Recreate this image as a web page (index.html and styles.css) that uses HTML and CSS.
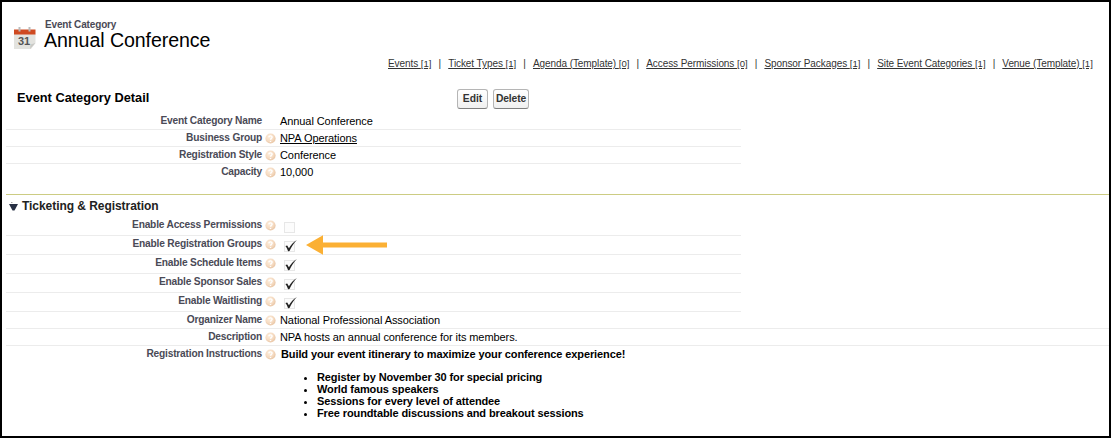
FILE: index.html
```html
<!DOCTYPE html>
<html lang="en">
<head>
<meta charset="utf-8">
<title>Annual Conference</title>
<link rel="stylesheet" href="styles.css">
</head>
<body>
<svg width="0" height="0" class="defs">
  <defs>
    <radialGradient id="orb" cx="40%" cy="35%" r="65%"><stop offset="0" stop-color="#fdeedd"/><stop offset=".6" stop-color="#f6dcc3"/><stop offset="1" stop-color="#e9c6a6"/></radialGradient>
    <symbol id="help" viewBox="0 0 11 11"><circle cx="5.5" cy="5.5" r="5.1" fill="url(#orb)"/><path d="M3.8 4.2C3.9 2.4 7.2 2.5 7.1 4.3C7 5.4 5.5 5.4 5.5 6.8M5.5 7.9V8.9" fill="none" stroke="#fff" stroke-width="1.4"/></symbol>
    <symbol id="box" viewBox="0 0 16 16"><rect x="3.5" y="3.5" width="10" height="10" fill="#fcfcfc" stroke="#d0d0d0" stroke-dasharray="1 1"/></symbol>
    <symbol id="check" viewBox="0 0 16 16"><use href="#box"/><path d="M4.4 8L6.2 7.4L7.9 10.2C9.8 7 12.2 4.4 15.9 2C12.6 5.3 10.5 8.8 8.5 13L7.1 13.3C6.5 11.4 5.7 9.6 4.4 8Z" fill="#222"/></symbol>
  </defs>
</svg>
<main class="page">
  <header class="title-bar">
    <svg class="calendar" width="24" height="24" viewBox="0 0 24 24">
      <path d="M1 7H22.5V16L18 22H1Z" fill="#e3e3df"/><path d="M22.5 16L17 22L17.5 17.5Z" fill="#c9c9c5"/>
      <rect x="1" y="2.5" width="21.5" height="5" fill="#cf4a21"/>
      <path d="M6.5 0V4.5M16.5 0V4.5" stroke="#bbb" stroke-width="2"/>
      <text x="5" y="18" class="day">31</text>
    </svg>
    <div><div class="kind">Event Category</div><h1>Annual Conference</h1></div>
  </header>
  <nav class="links">
    <a>Events <small>[1]</small></a><i>|</i><a>Ticket Types <small>[1]</small></a><i>|</i><a>Agenda (Template) <small>[0]</small></a><i>|</i><a>Access Permissions <small>[0]</small></a><i>|</i><a>Sponsor Packages <small>[1]</small></a><i>|</i><a>Site Event Categories <small>[1]</small></a><i>|</i><a>Venue (Template) <small>[1]</small></a>
  </nav>
  <div class="detail-bar"><h2>Event Category Detail</h2><button class="edit">Edit</button><button class="delete">Delete</button></div>
  <section class="fields">
    <div class="row"><b>Event Category Name</b><span></span><p>Annual Conference</p></div>
    <div class="row"><b>Business Group</b><svg class="help"><use href="#help"/></svg><p><u>NPA Operations</u></p></div>
    <div class="row"><b>Registration Style</b><svg class="help"><use href="#help"/></svg><p>Conference</p></div>
    <div class="row last"><b>Capacity</b><svg class="help"><use href="#help"/></svg><p>10,000</p></div>
  </section>
  <div class="section-head"><svg width="9" height="9" viewBox="0 0 9 9"><path d="M0 2H9L5.5 8.5H3.5Z" fill="#283044"/><path d="M2 .5H3.5" stroke="#aaa"/></svg><h3>Ticketing &amp; Registration</h3></div>
  <section class="fields">
    <div class="row tall"><b>Enable Access Permissions</b><svg class="help"><use href="#help"/></svg><svg class="mark"><use href="#box"/></svg></div>
    <div class="row tall"><b>Enable Registration Groups</b><svg class="help"><use href="#help"/></svg><svg class="mark"><use href="#check"/></svg><svg class="arrow" viewBox="0 0 81 20"><path d="M0 10L17 .2V7.5H81V12.5H17V19.8Z" fill="#fbb034"/></svg></div>
    <div class="row tall"><b>Enable Schedule Items</b><svg class="help"><use href="#help"/></svg><svg class="mark"><use href="#check"/></svg></div>
    <div class="row tall"><b>Enable Sponsor Sales</b><svg class="help"><use href="#help"/></svg><svg class="mark"><use href="#check"/></svg></div>
    <div class="row tall"><b>Enable Waitlisting</b><svg class="help"><use href="#help"/></svg><svg class="mark"><use href="#check"/></svg></div>
    <div class="row wide"><b>Organizer Name</b><svg class="help"><use href="#help"/></svg><p>National Professional Association</p></div>
    <div class="row wide"><b>Description</b><svg class="help"><use href="#help"/></svg><p>NPA hosts an annual conference for its members.</p></div>
    <div class="row last"><b>Registration Instructions</b><svg class="help"><use href="#help"/></svg>
      <div class="rich"><div>Build your event itinerary to maximize your conference experience!</div>
        <ul><li>Register by November 30 for special pricing</li><li>World famous speakers</li><li>Sessions for every level of attendee</li><li>Free roundtable discussions and breakout sessions</li></ul></div></div>
  </section>
</main>
</body>
</html>
```

FILE: styles.css
```css
* { box-sizing: border-box; margin: 0; padding: 0; }
body { font-family: "Liberation Sans", Arial, sans-serif; background: #fff; color: #000; }
.defs { position: absolute; }
.page { width: 1111px; height: 438px; border: 2px solid #000; padding-left: 4px; overflow: hidden; white-space: nowrap; }
.title-bar { display: flex; height: 55px; padding: 17px 0 0 7px; }
.calendar { margin: 8px 7px 0 0; }
.day { font-size: 11px; font-weight: bold; fill: #555; }
.kind { font-size: 10px; line-height: 12px; font-weight: bold; letter-spacing: -.15px; color: #4a4a56; padding-left: 1px; }
h1 { font-size: 19.6px; line-height: 20px; margin-top: -1px; letter-spacing: -.08px; font-weight: normal; }
.links { display: flex; justify-content: space-between; width: 705px; margin-left: 382px; height: 29px; font-size: 10px; line-height: 14px; letter-spacing: -.08px; color: #333; }
.links a { text-decoration: underline; }
.links small { font-size: 9.6px; letter-spacing: 0; }
.links i { font-style: normal; }
.detail-bar { display: flex; height: 27px; padding-left: 11px; }
h2 { width: 440px; font-size: 12.8px; line-height: 24px; }
button { height: 20px; margin-top: 3px; border: 1px solid #b5b5b5; border-bottom-color: #7f7f7f; border-radius: 3px; background: linear-gradient(#fff, #f0f0f0); font: bold 10.3px/18px "Liberation Sans", Arial, sans-serif; color: #333; }
.edit { width: 31px; margin-right: 5px; }
.delete { width: 36px; letter-spacing: -.15px; }
.row { display: grid; grid-template-columns: 256px 11px 16px 1fr; width: 735px; height: 17px; border-bottom: 1px solid #ececec; align-items: start; }
.row b { text-align: right; font-size: 10.2px; line-height: 16px; letter-spacing: -.2px; color: #4a4a56; }
.row p { grid-column: 3 / 5; padding-left: 7px; font-size: 11px; line-height: 17px; letter-spacing: -.08px; }
.tall { height: 19px; }
.row.wide { width: 1103px; }
.row.last { border: 0; height: auto; }
.help { width: 11px; height: 11px; margin: 3px 0 0 3px; }
.mark { width: 16px; height: 16px; margin: 2px 0 0 8px; }
.arrow { width: 81px; height: 20px; margin: -1px 0 0 17px; }
.section-head { display: flex; align-items: center; gap: 4px; height: 23px; margin-top: 13px; padding-left: 3px; border-top: 1px solid #cccc83; }
h3 { font-size: 12px; line-height: 22px; letter-spacing: -.05px; color: #222; }
.rich { grid-column: 3 / 5; padding-left: 8px; font-size: 11px; font-weight: bold; line-height: 17px; letter-spacing: -.11px; }
ul { margin: 8px 0 0 36px; line-height: 12px; }
```
